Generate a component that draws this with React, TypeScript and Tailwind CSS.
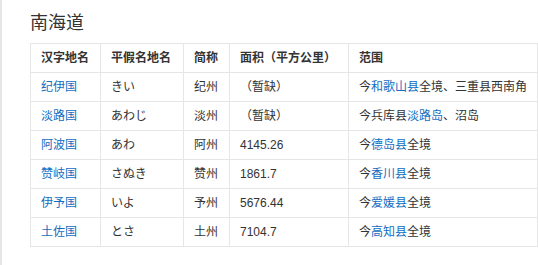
const rows = [
  { name: "纪伊国", kana: "きい", short: "纪州", area: "（暂缺）", range: [["今", false], ["和歌山县", true], ["全境、三重县西南角", false]] },
  { name: "淡路国", kana: "あわじ", short: "淡州", area: "（暂缺）", range: [["今兵库县", false], ["淡路岛", true], ["、沼岛", false]] },
  { name: "阿波国", kana: "あわ", short: "阿州", area: "4145.26", range: [["今", false], ["德岛县", true], ["全境", false]] },
  { name: "赞岐国", kana: "さぬき", short: "赞州", area: "1861.7", range: [["今", false], ["香川县", true], ["全境", false]] },
  { name: "伊予国", kana: "いよ", short: "予州", area: "5676.44", range: [["今", false], ["爱媛县", true], ["全境", false]] },
  { name: "土佐国", kana: "とさ", short: "土州", area: "7104.7", range: [["今", false], ["高知县", true], ["全境", false]] },
] as const

const headers = ["汉字地名", "平假名地名", "简称", "面积（平方公里）", "范围"]

const cell = "border border-[#e6e6e6] pl-[10px] pr-0 whitespace-nowrap overflow-hidden"

export default function App() {
  return (
    <div
      className="h-[265px] w-[538px] overflow-hidden border-l-2 border-[#e6e6e6] bg-white text-[#333]"
      style={{ fontFamily: '"Liberation Sans", "Noto Sans CJK SC", sans-serif' }}
    >
      <div className="pl-[28px] pt-[11px]">
        <h2 className="text-[18px] leading-[24px] font-normal text-[#333]">南海道</h2>
        <table className="mt-[8px] w-[508px] table-fixed border-collapse text-[12px] leading-[16px]">
          <colgroup>
            <col className="w-[70px]" />
            <col className="w-[83px]" />
            <col className="w-[46px]" />
            <col className="w-[119px]" />
            <col />
          </colgroup>
          <thead>
            <tr className="h-[29px]">
              {headers.map((h) => (
                <th key={h} className={`${cell} text-left font-bold`}>
                  {h}
                </th>
              ))}
            </tr>
          </thead>
          <tbody>
            {rows.map((r) => (
              <tr key={r.name} className="h-[29px]">
                <td className={`${cell} text-[#136ec2]`}>{r.name}</td>
                <td className={cell}>{r.kana}</td>
                <td className={cell}>{r.short}</td>
                <td className={cell}>{r.area}</td>
                <td className={cell}>
                  {r.range.map(([t, link], i) => (
                    <span key={i} className={link ? "text-[#136ec2]" : ""}>
                      {t}
                    </span>
                  ))}
                </td>
              </tr>
            ))}
          </tbody>
        </table>
      </div>
    </div>
  )
}
